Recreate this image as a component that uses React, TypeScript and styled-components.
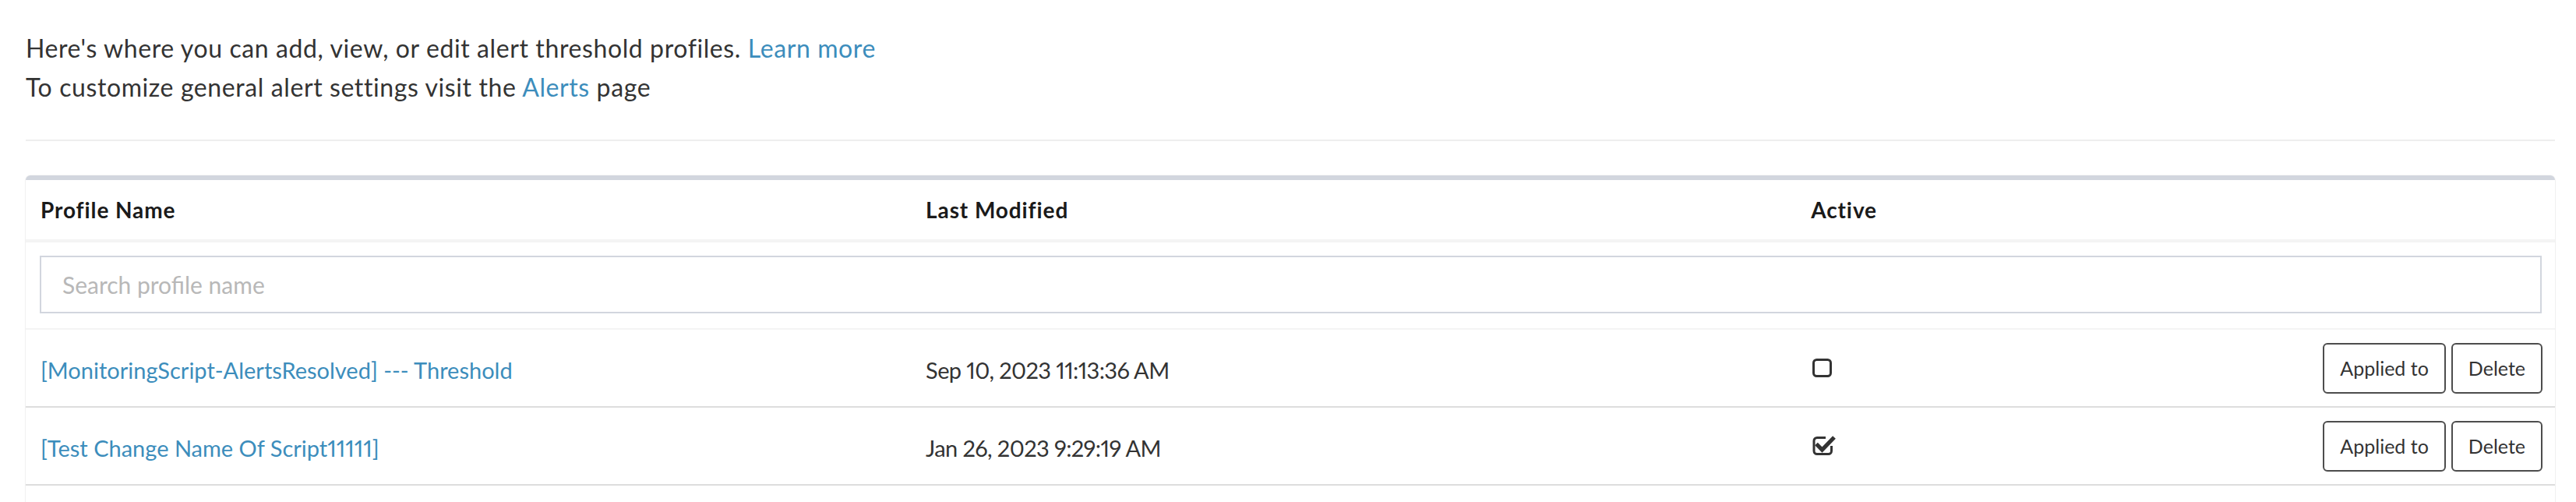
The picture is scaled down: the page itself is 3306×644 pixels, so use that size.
import React from "react";
import styled, { createGlobalStyle } from "styled-components";

const GlobalStyle = createGlobalStyle`
  html, body {
    margin: 0;
    padding: 0;
    background: #ffffff;
  }
  body {
    font-family: "Lato", "Liberation Sans", sans-serif;
    color: #333333;
    font-variant-numeric: proportional-nums;
  }
  * { box-sizing: border-box; }
`;

const Page = styled.div`
  padding: 37px 27px 0 33px;
`;

const Intro = styled.div`
  font-size: 32px;
  letter-spacing: 0.6px;
  line-height: 50px;
  color: #333333;
  margin-bottom: 42px;
`;

const Line = styled.div``;

const TextLink = styled.a`
  color: #3c8dbc;
  text-decoration: none;
  cursor: pointer;
`;

const Divider = styled.hr`
  border: 0;
  height: 2px;
  background: #eeeeee;
  margin: 0 0 44px 0;
`;

const Box = styled.div`
  border-top: 6px solid #d2d6de;
  border-radius: 6px;
  background: #ffffff;
  box-shadow: 0 2px 2px rgba(0, 0, 0, 0.1), 0 0 0 1px rgba(0, 0, 0, 0.03);
  padding-bottom: 40px;
`;

const Grid = styled.div<{ $border?: string; $height: number }>`
  display: grid;
  grid-template-columns: 35% 35% 1fr auto;
  align-items: center;
  min-height: ${(p) => p.$height}px;
  border-bottom: ${(p) => p.$border ?? "none"};
`;

const HeadCell = styled.div`
  padding: 0 17px 0 19px;
  font-size: 28px;
  letter-spacing: 0.9px;
  font-weight: 700;
  color: #1a1a1a;
`;

const SearchRow = styled.div`
  padding: 17px 17px 19px 18px;
  border-bottom: 2px solid #f4f4f4;
`;

const SearchInput = styled.input`
  display: block;
  width: 100%;
  height: 74px;
  border: 2px solid #d2d6de;
  border-radius: 0;
  padding: 0 27px;
  font-family: "Lato", "Liberation Sans", sans-serif;
  font-size: 30px;
  color: #333333;
  outline: none;
  &::placeholder {
    color: #b8b8b8;
  }
`;

const Cell = styled.div<{ $tight?: boolean }>`
  padding: 0 17px 0 19px;
  font-size: 29px;
  letter-spacing: ${(p) => (p.$tight ? "-0.6px" : "0")};
  color: #333333;
  transform: translateY(2px);
`;

const CheckCell = styled.div`
  padding: 0 17px 0 21px;
  display: flex;
  align-items: center;
`;

const Actions = styled.div`
  display: flex;
  gap: 7px;
  padding: 0 16px 0 0;
`;

const Button = styled.button`
  height: 65px;
  padding: 0 20px;
  border: 2px solid #4d4d4d;
  border-radius: 6px;
  background: #ffffff;
  font-family: "Lato", "Liberation Sans", sans-serif;
  font-size: 25px;
  color: #333333;
  cursor: pointer;
`;

const BoxIcon = ({ checked }: { checked: boolean }) =>
  checked ? (
    <svg width="31" height="27" viewBox="0 0 31 27" style={{ marginTop: "-2px" }}>
      <path
        d="M17 3.5 H6 a4 4 0 0 0 -4 4 V20.5 a4 4 0 0 0 4 4 H20.5 a4 4 0 0 0 4 -4 V14"
        fill="none"
        stroke="#333"
        strokeWidth="3"
      />
      <path d="M5 11.5 L12.5 19 L28 3" fill="none" stroke="#333" strokeWidth="5.2" strokeLinejoin="miter" />
    </svg>
  ) : (
    <svg width="26" height="25" viewBox="0 0 26 25">
      <rect x="1.5" y="1.5" width="22" height="21" rx="4" fill="none" stroke="#333" strokeWidth="3" />
    </svg>
  );

const rows = [
  { name: "[MonitoringScript-AlertsResolved] --- Threshold", date: "Sep 10, 2023 11:13:36 AM", active: false },
  { name: "[Test Change Name Of Script11111]", date: "Jan 26, 2023 9:29:19 AM", active: true },
];

export default function App() {
  return (
    <>
      <GlobalStyle />
      <Page>
        <Intro>
          <Line>
            Here's where you can add, view, or edit alert threshold profiles. <TextLink>Learn more</TextLink>
          </Line>
          <Line>
            To customize general alert settings visit the <TextLink>Alerts</TextLink> page
          </Line>
        </Intro>
        <Divider />
        <Box>
          <Grid $height={80} $border="4px solid #f4f4f4">
            <HeadCell>Profile Name</HeadCell>
            <HeadCell>Last Modified</HeadCell>
            <HeadCell>Active</HeadCell>
            <HeadCell />
          </Grid>
          <SearchRow>
            <SearchInput placeholder="Search profile name" />
          </SearchRow>
          {rows.map((r) => (
            <Grid key={r.name} $height={100} $border="2px solid #dddddd">
              <Cell>
                <TextLink>{r.name}</TextLink>
              </Cell>
              <Cell $tight>{r.date}</Cell>
              <CheckCell>
                <BoxIcon checked={r.active} />
              </CheckCell>
              <Actions>
                <Button>Applied to</Button>
                <Button>Delete</Button>
              </Actions>
            </Grid>
          ))}
        </Box>
      </Page>
    </>
  );
}
